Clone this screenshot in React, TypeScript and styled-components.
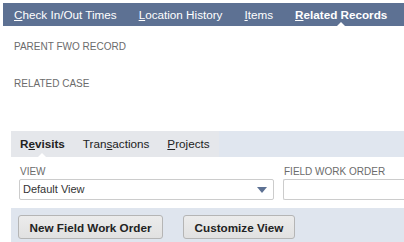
import React from "react";
import styled, { createGlobalStyle } from "styled-components";

const GlobalStyle = createGlobalStyle`
  html, body {
    margin: 0;
    padding: 0;
    background: #ffffff;
    font-family: "Liberation Sans", Arial, sans-serif;
    overflow: hidden;
  }
  * {
    box-sizing: border-box;
  }
`;

const Page = styled.div`
  width: 404px;
  height: 242px;
  padding-top: 3px;
  overflow: hidden;
`;

const TopBar = styled.nav`
  margin-left: 3px;
  height: 23px;
  background-color: #5d7193;
  display: flex;
  align-items: center;
  white-space: nowrap;
`;

const NavItem = styled.span<{ $active?: boolean }>`
  position: relative;
  padding: 0 11px;
  height: 23px;
  line-height: 23px;
  font-size: 11.7px;
  color: #ffffff;
  font-weight: ${(p) => (p.$active ? 700 : 400)};

  &::after {
    content: "";
    display: ${(p) => (p.$active ? "block" : "none")};
    position: absolute;
    left: 50%;
    bottom: 0;
    margin-left: -4px;
    border-left: 4px solid transparent;
    border-right: 4px solid transparent;
    border-bottom: 4px solid #ffffff;
  }
`;

const Fields = styled.div`
  padding: 15px 0 0 14px;
  height: 105px;
`;

const Field = styled.div`
  height: 37px;
`;

const Label = styled.div`
  font-size: 10px;
  line-height: 12px;
  color: #6b6b6b;
  text-transform: uppercase;
  white-space: nowrap;
`;

const SubTabs = styled.section`
  margin-left: 11px;
`;

const TabBar = styled.div`
  height: 26px;
  display: flex;
  background-color: #e0e6ef;
`;

const TabGroup = styled.div`
  display: flex;
  background-color: #e5e7eb;
`;

const Tab = styled.span<{ $active?: boolean }>`
  position: relative;
  padding: 0 9px;
  line-height: 26px;
  font-size: 11.7px;
  color: #222222;
  font-weight: ${(p) => (p.$active ? 700 : 400)};
  white-space: nowrap;

  &::after {
    content: "";
    display: ${(p) => (p.$active ? "block" : "none")};
    position: absolute;
    left: 50%;
    bottom: 0;
    margin-left: -4px;
    border-left: 4px solid transparent;
    border-right: 4px solid transparent;
    border-bottom: 4px solid #ffffff;
  }
`;

const Panel = styled.div`
  height: 51px;
  padding: 9px 0 0 8px;
  display: flex;
  gap: 9px;
  background: #ffffff;
`;

const FieldCol = styled.div<{ $width: number }>`
  width: ${(p) => p.$width}px;
  flex-shrink: 0;
  display: flex;
  flex-direction: column;
  gap: 1px;
  padding-left: 1px;
`;

const SelectBox = styled.div`
  position: relative;
  height: 21px;
  border: 1px solid #cccccc;
  border-radius: 2px;
  background: #ffffff;
  margin-left: -1px;
  padding-left: 3px;
  font-size: 11px;
  line-height: 19px;
  color: #333333;
`;

const Arrow = styled.span`
  position: absolute;
  right: 6px;
  top: 7px;
  border-left: 5px solid transparent;
  border-right: 5px solid transparent;
  border-top: 6px solid #5d7193;
`;

const InputBox = styled.div`
  height: 21px;
  border: 1px solid #cccccc;
  border-right: none;
  border-radius: 2px 0 0 2px;
  background: #ffffff;
  margin-left: -1px;
`;

const ButtonBar = styled.div`
  height: 34px;
  background-color: #dfe5ee;
  padding: 7px 0 0 7px;
  display: flex;
  gap: 20px;
`;

const Button = styled.button<{ $width: number }>`
  width: ${(p) => p.$width}px;
  height: 24px;
  padding: 0;
  border: 1px solid #b5b5b5;
  border-radius: 3px;
  background: linear-gradient(#ececec, #e1e1e1);
  font-family: "Liberation Sans", Arial, sans-serif;
  font-size: 11.7px;
  font-weight: 700;
  color: #222222;
  white-space: nowrap;
`;

export default function App() {
  return (
    <>
      <GlobalStyle />
      <Page>
        <TopBar>
          <NavItem>
            <u>C</u>heck In/Out Times
          </NavItem>
          <NavItem>
            <u>L</u>ocation History
          </NavItem>
          <NavItem>
            <u>I</u>tems
          </NavItem>
          <NavItem $active>
            <u>R</u>elated Records
          </NavItem>
        </TopBar>
        <Fields>
          <Field>
            <Label>Parent FWO Record</Label>
          </Field>
          <Field>
            <Label>Related Case</Label>
          </Field>
        </Fields>
        <SubTabs>
          <TabBar>
            <TabGroup>
              <Tab $active>
                R<u>e</u>visits
              </Tab>
              <Tab>
                Tran<u>s</u>actions
              </Tab>
              <Tab>
                <u>P</u>rojects
              </Tab>
            </TabGroup>
          </TabBar>
          <Panel>
            <FieldCol $width={255}>
              <Label>View</Label>
              <SelectBox>
                Default View
                <Arrow />
              </SelectBox>
            </FieldCol>
            <FieldCol $width={140}>
              <Label>Field Work Order</Label>
              <InputBox />
            </FieldCol>
          </Panel>
          <ButtonBar>
            <Button $width={145}>New Field Work Order</Button>
            <Button $width={112}>Customize View</Button>
          </ButtonBar>
        </SubTabs>
      </Page>
    </>
  );
}
